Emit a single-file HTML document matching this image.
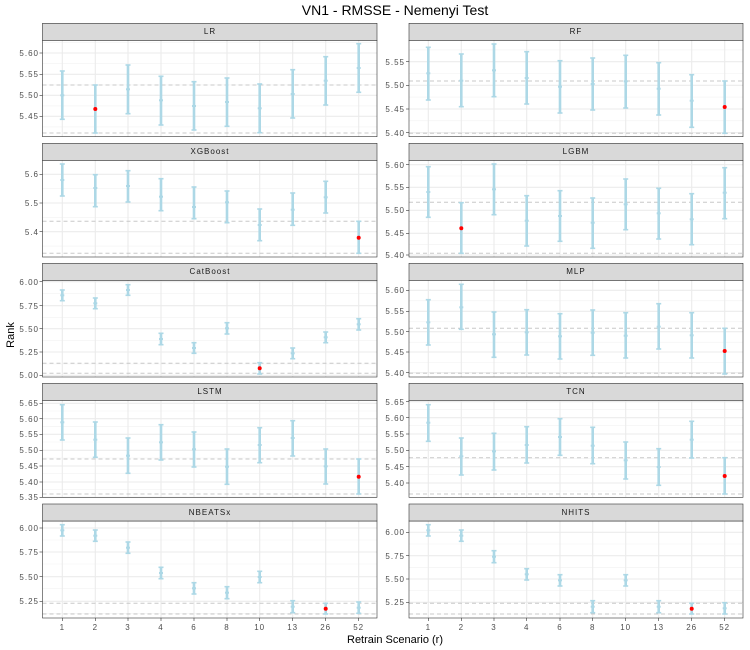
<!DOCTYPE html>
<html><head><meta charset="utf-8"><style>
html,body{margin:0;padding:0;background:#fff;}
svg{display:block;font-family:"Liberation Sans","DejaVu Sans",sans-serif;}
.t{font-size:8px;fill:#4d4d4d;text-anchor:end;letter-spacing:1px;}
.s{font-size:8px;fill:#1a1a1a;text-anchor:middle;letter-spacing:1px;}
.x{font-size:8px;fill:#4d4d4d;text-anchor:middle;letter-spacing:1px;}
</style></head><body>
<svg id="g" width="750" height="650" viewBox="0 0 750 650" xmlns="http://www.w3.org/2000/svg">
<rect width="750" height="650" fill="#fff"/>
<g id="plots"></g>
<text x="395" y="15" font-size="14" text-anchor="middle" fill="#000">VN1 - RMSSE - Nemenyi Test</text>
<text x="14" y="335" font-size="11" text-anchor="middle" fill="#000" transform="rotate(-90 14 335)">Rank</text>
<text x="395" y="643" font-size="11" text-anchor="middle" fill="#000">Retrain Scenario (r)</text>
<!-- strip labels -->
<text class="s" x="210" y="34">LR</text>
<text class="s" x="576" y="34">RF</text>
<text class="s" x="210" y="154">XGBoost</text>
<text class="s" x="576" y="154">LGBM</text>
<text class="s" x="210" y="274">CatBoost</text>
<text class="s" x="576" y="274">MLP</text>
<text class="s" x="210" y="394">LSTM</text>
<text class="s" x="576" y="394">TCN</text>
<text class="s" x="210" y="515">NBEATSx</text>
<text class="s" x="576" y="515">NHITS</text>
<!-- y ticks left -->
<text class="t" x="39" y="56">5.60</text><text class="t" x="39" y="77">5.55</text><text class="t" x="39" y="98">5.50</text><text class="t" x="39" y="119">5.45</text>
<text class="t" x="39" y="177">5.6</text><text class="t" x="39" y="206">5.5</text><text class="t" x="39" y="235">5.4</text>
<text class="t" x="39" y="285">6.00</text><text class="t" x="39" y="309">5.75</text><text class="t" x="39" y="332">5.50</text><text class="t" x="39" y="355">5.25</text><text class="t" x="39" y="378">5.00</text>
<text class="t" x="39" y="406">5.65</text><text class="t" x="39" y="422">5.60</text><text class="t" x="39" y="437">5.55</text><text class="t" x="39" y="453">5.50</text><text class="t" x="39" y="469">5.45</text><text class="t" x="39" y="485">5.40</text><text class="t" x="39" y="500">5.35</text>
<text class="t" x="39" y="531">6.00</text><text class="t" x="39" y="555">5.75</text><text class="t" x="39" y="580">5.50</text><text class="t" x="39" y="604">5.25</text>
<!-- y ticks right -->
<text class="t" x="405" y="65">5.55</text><text class="t" x="405" y="88">5.50</text><text class="t" x="405" y="112">5.45</text><text class="t" x="405" y="136">5.40</text>
<text class="t" x="405" y="168">5.60</text><text class="t" x="405" y="190">5.55</text><text class="t" x="405" y="213">5.50</text><text class="t" x="405" y="236">5.45</text><text class="t" x="405" y="258">5.40</text>
<text class="t" x="405" y="293">5.60</text><text class="t" x="405" y="314">5.55</text><text class="t" x="405" y="335">5.50</text><text class="t" x="405" y="355">5.45</text><text class="t" x="405" y="376">5.40</text>
<text class="t" x="405" y="405">5.65</text><text class="t" x="405" y="421">5.60</text><text class="t" x="405" y="437">5.55</text><text class="t" x="405" y="453">5.50</text><text class="t" x="405" y="470">5.45</text><text class="t" x="405" y="486">5.40</text>
<text class="t" x="405" y="535">6.00</text><text class="t" x="405" y="559">5.75</text><text class="t" x="405" y="582">5.50</text><text class="t" x="405" y="605">5.25</text>
<!-- x labels -->
<g class="x">
<text x="62.3" y="630">1</text><text x="95.3" y="630">2</text><text x="128" y="630">3</text><text x="161" y="630">4</text><text x="194" y="630">6</text><text x="227" y="630">8</text><text x="259.7" y="630">10</text><text x="292.7" y="630">13</text><text x="325.7" y="630">26</text><text x="358.7" y="630">52</text>
<text x="428.3" y="630">1</text><text x="461.3" y="630">2</text><text x="494" y="630">3</text><text x="526.7" y="630">4</text><text x="560" y="630">6</text><text x="592.7" y="630">8</text><text x="625.7" y="630">10</text><text x="658.7" y="630">13</text><text x="691.7" y="630">26</text><text x="724.7" y="630">52</text>
</g>
</svg>
<script>
var XL=[62.3,95.3,128,161,194,227,259.7,292.7,325.7,358.7];
var XR=[428.3,461.3,494,526.7,560,592.7,625.7,658.7,691.7,724.7];
var P=[
{L:1,st:23.3,pb:136.7,tk:[53,74.3,95.3,116.3],d:[85,133],r:1,b:[[71,95.3,119.3],[85,109,133],[65,89.3,113.7],[76.3,100.3,125],[81.7,106,130],[78,102,126.3],[84,108.3,132.7],[69.7,94,118],[56.7,80.7,105],[43.7,68,92.3]]},
{L:0,st:23.3,pb:136.7,tk:[61.7,85.3,109,132.7],d:[81,133.3],r:9,b:[[47.3,73.3,100],[54,80.7,106.7],[44,70.3,96.7],[51.7,78,104],[60.7,86.7,113],[58,84,110],[55.3,81.3,108],[62.7,88.7,115],[74.7,100.7,127.3],[81,107,133.3]]},
{L:1,st:143.3,pb:257,tk:[174.3,203,231.7],d:[221.3,253.3],r:9,b:[[164,180,196],[174.7,188,206.7],[170.7,186,202],[178.7,196.7,210.7],[187,207,218.7],[191,202.3,222.7],[209,225,240.7],[193,209.7,225.3],[181.3,197.3,213],[221.3,237.7,253.3]]},
{L:0,st:143.3,pb:257,tk:[164.7,187.3,210.3,233.3,255],d:[202.3,253.3],r:1,b:[[166.7,192,217.3],[202.7,228.3,253.3],[164,189.3,214.7],[195.7,220.7,246],[190.7,216,241.3],[198,222.7,248.3],[179,204.3,229.7],[188.3,213.3,239],[193.7,219.3,244.7],[167.7,192.7,218.7]]},
{L:1,st:263.3,pb:377,tk:[281.7,305.7,328.7,352,375.3],d:[363.3,373.3],r:6,b:[[290,295.3,300.7],[298,303.3,308.7],[284.7,290,295.3],[333.3,339,344.7],[342.7,348,353.3],[322.7,328.3,334],[362.7,368.3,374],[348,353.3,358.7],[332,337.3,342.7],[318.7,324.3,330]]},
{L:0,st:263.3,pb:377,tk:[290.3,311.3,331.7,352,372.7],d:[328.3,373.3],r:9,b:[[299.7,322.3,345],[284.3,307.3,329.3],[312,334.3,357.3],[309.7,332.3,355],[313.7,336.3,359],[310,332.7,355.3],[312.7,335.7,358],[303.7,326.7,349],[312.7,335.3,358],[328.3,351,374]]},
{L:1,st:383.3,pb:497.3,tk:[403.3,418.7,434.3,450.3,466,482,497.3],d:[459,494],r:9,b:[[404.7,422.3,440],[422,439.7,457.3],[438,455.7,473.3],[424.7,442.3,460],[432,449.3,467],[449,466.7,484.3],[427.7,445,462.7],[420.7,438,456],[449,466.3,484],[459,476.7,494]]},
{L:0,st:383.3,pb:497.3,tk:[401.7,417.7,434,450.3,466.7,483],d:[457.7,494],r:9,b:[[404.7,422.7,441.3],[438,456.3,475],[433.3,451.3,470],[426.7,445,463],[418.7,437,455.3],[427.3,445.7,463.7],[442,460.3,479],[448.7,467,485.3],[421.3,439.7,458],[457.7,476,494]]},
{L:1,st:504,pb:618,tk:[528,552,576.7,601.3],d:[603.3,614],r:8,b:[[524.7,530.3,536],[530,535.7,541.3],[542,547.7,553.3],[567.3,573,578.7],[582.7,588.3,594],[586.7,592.7,598.7],[571.3,577,582.7],[600.7,606.7,612.7],[603.3,608.7,614],[602,607.7,613.3]]},
{L:0,st:504,pb:618,tk:[532.3,555.7,579,602.3],d:[603.3,614],r:8,b:[[524.7,530.3,536],[530,535.7,541.3],[550.7,556.7,562.7],[568.7,574.3,580],[574.7,580.3,586],[600.7,606.7,612.7],[574.7,580.3,586],[600.7,606.7,612.7],[603.3,608.7,614],[602.7,608.3,614]]}
];
var h='';
P.forEach(function(p){
 var x0=p.L?42.5:409,x1=p.L?377:743,X=p.L?XL:XR,pt=p.st+17;
 h+='<rect x="'+x0+'" y="'+pt+'" width="'+(x1-x0)+'" height="'+(p.pb-pt)+'" fill="#fff"/>';
 var t=p.tk,step=t.length>1?t[1]-t[0]:20,mins=[];
 for(var y=t[0]-step/2;y>pt;y-=step)mins.push(y);
 for(var i=0;i<t.length;i++){var m=t[i]+step/2;if(m<p.pb)mins.push(m);}
 mins.forEach(function(y){h+='<line x1="'+x0+'" x2="'+x1+'" y1="'+y+'" y2="'+y+'" stroke="#f2f2f2" stroke-width="0.6"/>';});
 t.forEach(function(y){h+='<line x1="'+x0+'" x2="'+x1+'" y1="'+y+'" y2="'+y+'" stroke="#ebebeb" stroke-width="1.1"/><line x1="'+(x0-3)+'" x2="'+x0+'" y1="'+y+'" y2="'+y+'" stroke="#333" stroke-width="0.6"/>';});
 X.forEach(function(x){h+='<line y1="'+pt+'" y2="'+p.pb+'" x1="'+x+'" x2="'+x+'" stroke="#ebebeb" stroke-width="1.1"/>';});
 p.d.forEach(function(y){h+='<line x1="'+x0+'" x2="'+x1+'" y1="'+y+'" y2="'+y+'" stroke="#c8c8c8" stroke-width="1" stroke-dasharray="4,3"/>';});
 p.b.forEach(function(b,i){var x=X[i];
  h+='<line x1="'+x+'" x2="'+x+'" y1="'+b[0]+'" y2="'+b[2]+'" stroke="#add8e6" stroke-width="2.6"/>';
  h+='<line x1="'+(x-2.5)+'" x2="'+(x+2.5)+'" y1="'+b[0]+'" y2="'+b[0]+'" stroke="#add8e6" stroke-width="1.6"/>';
  h+='<line x1="'+(x-2.5)+'" x2="'+(x+2.5)+'" y1="'+b[2]+'" y2="'+b[2]+'" stroke="#add8e6" stroke-width="1.6"/>';
  if(i==p.r)h+='<circle cx="'+x+'" cy="'+b[1]+'" r="2" fill="#ff0000"/>';
  else h+='<rect x="'+(x-2)+'" y="'+(b[1]-1)+'" width="4" height="2" fill="#add8e6"/>';
 });
 h+='<rect x="'+x0+'" y="'+pt+'" width="'+(x1-x0)+'" height="'+(p.pb-pt)+'" fill="none" stroke="#333" stroke-width="0.6"/>';
 h+='<rect x="'+x0+'" y="'+p.st+'" width="'+(x1-x0)+'" height="17" fill="#d9d9d9" stroke="#333" stroke-width="0.6"/>';
 if(p.st==504)X.forEach(function(x){h+='<line y1="'+p.pb+'" y2="'+(p.pb+3)+'" x1="'+x+'" x2="'+x+'" stroke="#333" stroke-width="0.6"/>';});
});
document.getElementById('plots').innerHTML=h;
</script>
</body></html>
